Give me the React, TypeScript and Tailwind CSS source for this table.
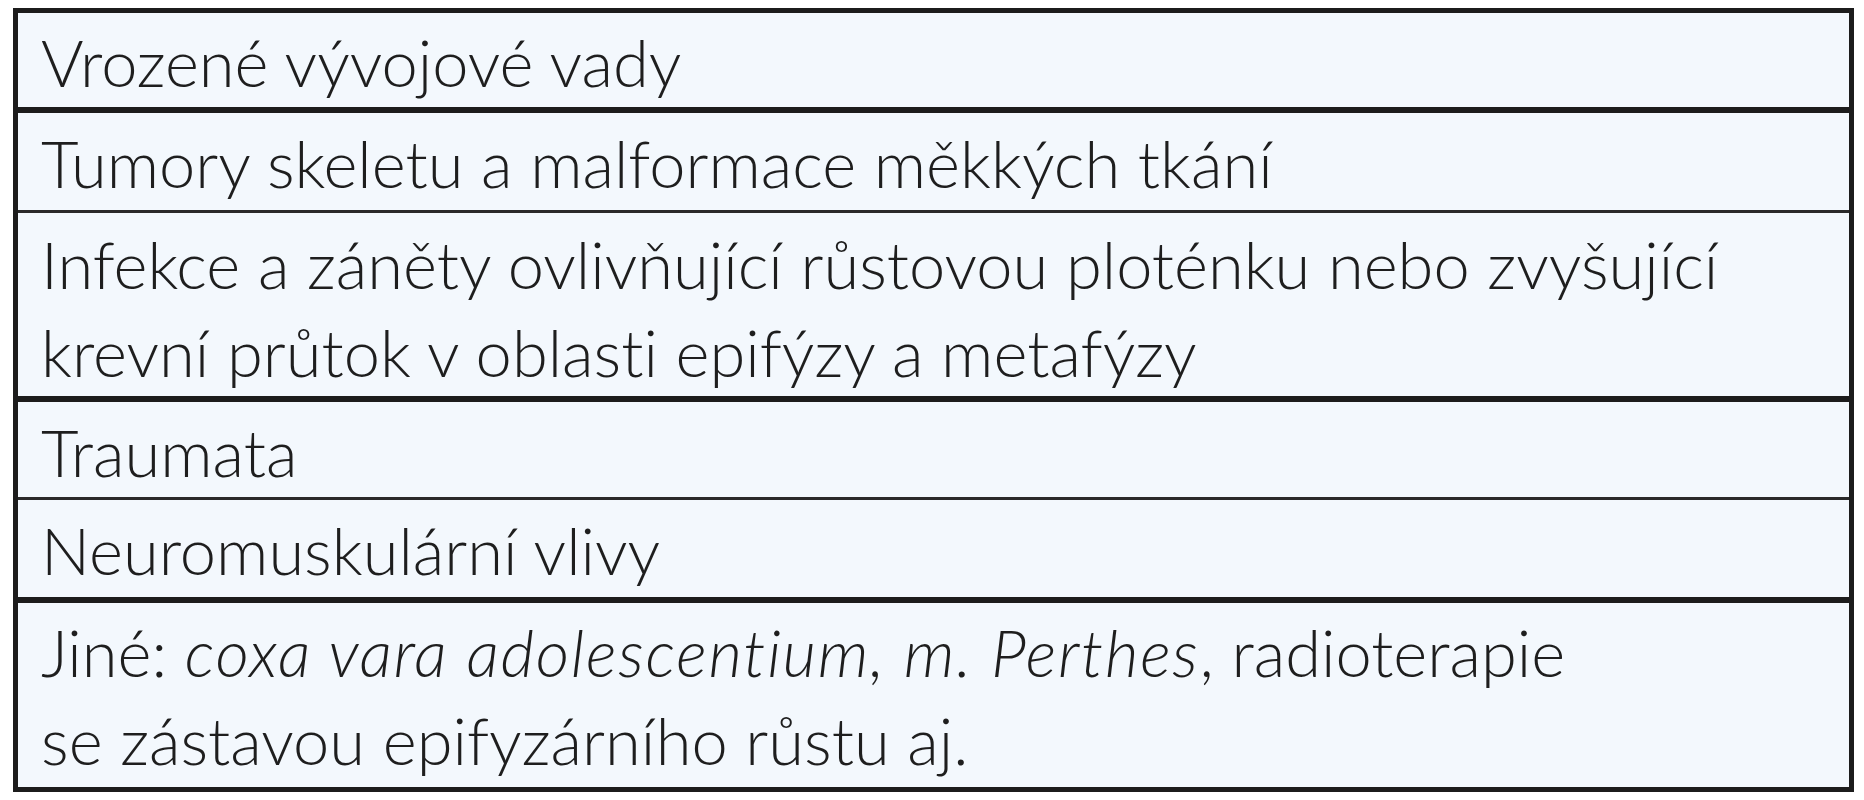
import React from "react";

const rowText = "pl-[23px] text-[65px] leading-[88px] text-[#1e1e1e] font-light whitespace-nowrap [font-variant-ligatures:none]";

export default function App() {
  return (
    <div className="min-h-[800px] w-[1864px] bg-white pl-[13px] pt-[8px]" style={{ fontFamily: "Lato, 'Noto Sans', sans-serif" }}>
      <div className="w-[1841px] border-[5px] border-[#1c1c1c] bg-[#f3f8fd]">
        <div className={`h-[94px] pt-[5px] ${rowText}`}>Vrozené vývojové vady</div>
        <div className={`h-[103px] border-t-[6px] border-[#1c1c1c] pt-[6px] ${rowText}`}>Tumory skeletu a malformace měkkých tkání</div>
        <div className={`h-[186px] border-t-[3px] border-[#2a2a2a] pt-[7px] ${rowText}`}>
          Infekce a záněty ovlivňující růstovou ploténku nebo zvyšující
          <br />
          krevní průtok v oblasti epifýzy a metafýzy
        </div>
        <div className={`h-[101px] border-t-[6px] border-[#1c1c1c] pt-[6px] ${rowText}`}>Traumata</div>
        <div className={`h-[100px] border-t-[3px] border-[#2a2a2a] pt-[6px] ${rowText}`}>Neuromuskulární vlivy</div>
        <div className={`h-[190px] border-t-[6px] border-[#1c1c1c] pt-[5px] ${rowText}`}>
          Jiné: <span className="italic tracking-[1.7px]">coxa vara adolescentium, m. Perthes</span>, radioterapie
          <br />
          se zástavou epifyzárního růstu aj.
        </div>
      </div>
    </div>
  );
}
